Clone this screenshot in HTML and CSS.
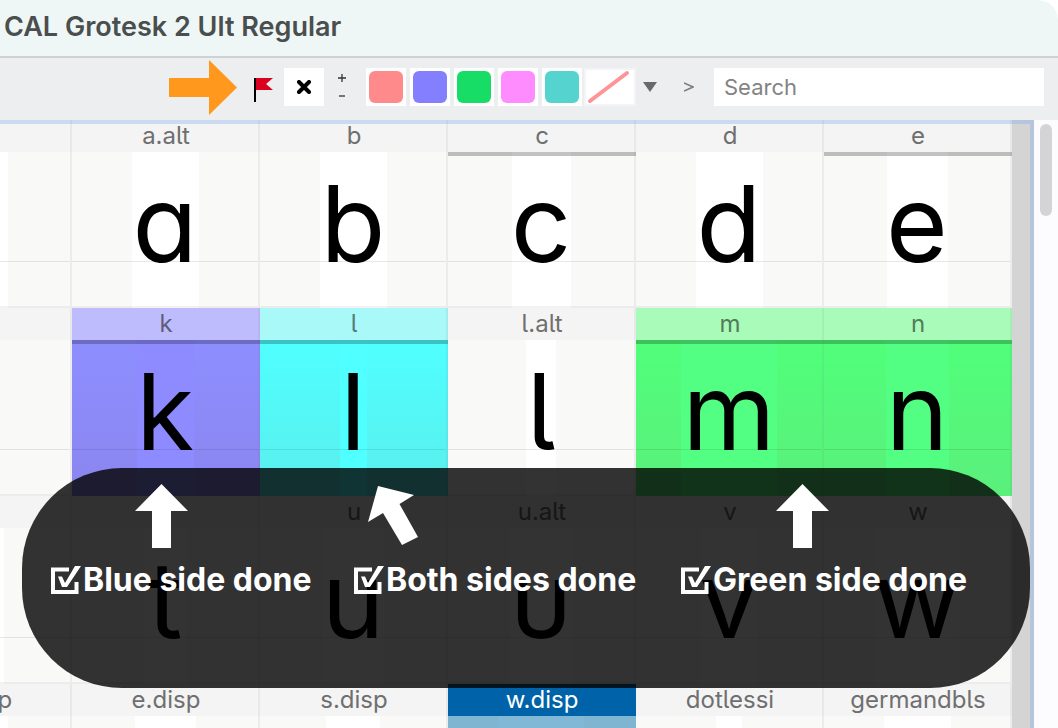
FILE: index.html
```html
<!DOCTYPE html>
<html lang="en">
<head>
<meta charset="utf-8">
<title>CAL Grotesk 2 Ult Regular</title>
<link rel="stylesheet" href="styles.css">
</head>
<body>
<div class="window">
  <header class="titlebar"><h1 class="title">CAL Grotesk 2 Ult Regular</h1></header>

  <div class="toolbar">
    <svg class="pointer" width="69" height="56" viewBox="0 0 69 56" aria-hidden="true"><path d="M0 19H40V1L68 28.500L40 56V38H0Z" fill="#ff981d"/></svg>
    <button class="flag" aria-label="Flag"><svg width="20" height="24" viewBox="0 0 20 24"><path d="M0 0H2V24H0Z" fill="#000"/><path d="M2 0H19L12 6L19 12H2Z" fill="#dc0020"/></svg></button>
    <button class="clear" aria-label="Clear"><svg width="14" height="14" viewBox="0 0 14 14"><path d="M2 2L12 12M12 2L2 12" stroke="#000" stroke-width="4" stroke-linecap="round"/></svg></button>
    <div class="stepper">
      <button class="step" aria-label="Increase"><svg width="8" height="8" viewBox="0 0 8 8"><path d="M0 4H8M4 0V8" stroke="#333" stroke-width="1.3"/></svg></button>
      <button class="step" aria-label="Decrease"><svg width="8" height="8" viewBox="0 0 8 8"><path d="M1 4H7" stroke="#333" stroke-width="1.3"/></svg></button>
    </div>
    <div class="swatches">
      <button class="swatch" aria-label="Red"><span class="chip red"></span></button>
      <button class="swatch" aria-label="Blue"><span class="chip blue"></span></button>
      <button class="swatch" aria-label="Green"><span class="chip green"></span></button>
      <button class="swatch" aria-label="Pink"><span class="chip pink"></span></button>
      <button class="swatch" aria-label="Teal"><span class="chip teal"></span></button>
      <button class="nocolor" aria-label="No colour"><svg width="48" height="34" viewBox="0 0 48 34"><path d="M4 31L41 3" stroke="#ff9498" stroke-width="4" stroke-linecap="round"/></svg></button>
    </div>
    <button class="more" aria-label="More colours"><svg width="14" height="10" viewBox="0 0 14 10"><path d="M0 0H14L7 10Z" fill="#696969"/></svg></button>
    <button class="expand" aria-label="Expand"><svg width="10" height="10" viewBox="0 0 10 10"><path d="M0 1L9 5L0 9" fill="none" stroke="#7c7c7c" stroke-width="1.5"/></svg></button>
    <input class="search" type="text" placeholder="Search" aria-label="Search">
  </div>

  <main class="overview">
    <div class="glyphs">
      <div class="cell"><div class="name"></div><div class="body"><span class="glyph" style="width:62px"></span></div></div>
      <div class="cell"><div class="name">a.alt</div><div class="body"><span class="glyph alt-a" style="width:67px">a</span></div></div>
      <div class="cell"><div class="name">b</div><div class="body"><span class="glyph" style="width:67px">b</span></div></div>
      <div class="cell edited"><div class="name">c</div><div class="body"><span class="glyph" style="width:59px">c</span></div></div>
      <div class="cell"><div class="name">d</div><div class="body"><span class="glyph" style="width:67px">d</span></div></div>
      <div class="cell edited"><div class="name">e</div><div class="body"><span class="glyph" style="width:61px">e</span></div></div>

      <div class="cell"><div class="name"></div><div class="body"><span class="glyph" style="width:27px"></span></div></div>
      <div class="cell edited mark-blue"><div class="name">k</div><div class="body"><span class="glyph" style="width:57px">k</span></div></div>
      <div class="cell edited mark-cyan"><div class="name">l</div><div class="body"><span class="glyph" style="width:27px">l</span></div></div>
      <div class="cell"><div class="name">l.alt</div><div class="body"><span class="glyph alt-l" style="width:30px">l</span></div></div>
      <div class="cell edited mark-green"><div class="name">m</div><div class="body"><span class="glyph" style="width:96px">m</span></div></div>
      <div class="cell edited mark-green"><div class="name">n</div><div class="body"><span class="glyph" style="width:63px">n</span></div></div>

      <div class="cell"><div class="name"></div><div class="body"><span class="glyph" style="width:54px"></span></div></div>
      <div class="cell"><div class="name">t</div><div class="body"><span class="glyph" style="width:41px">t</span></div></div>
      <div class="cell"><div class="name">u</div><div class="body"><span class="glyph" style="width:63px">u</span></div></div>
      <div class="cell"><div class="name">u.alt</div><div class="body"><span class="glyph" style="width:63px">υ</span></div></div>
      <div class="cell"><div class="name">v</div><div class="body"><span class="glyph" style="width:57px">v</span></div></div>
      <div class="cell"><div class="name">w</div><div class="body"><span class="glyph" style="width:84px">w</span></div></div>

      <div class="cell"><div class="name">a.disp</div><div class="body"><span class="glyph" style="width:62px"></span></div></div>
      <div class="cell"><div class="name">e.disp</div><div class="body"><span class="glyph" style="width:61px"></span></div></div>
      <div class="cell"><div class="name">s.disp</div><div class="body"><span class="glyph" style="width:54px"></span></div></div>
      <div class="cell selected"><div class="name">w.disp</div><div class="body"><span class="glyph" style="width:86px"></span></div></div>
      <div class="cell"><div class="name">dotlessi</div><div class="body"><span class="glyph" style="width:26px"></span></div></div>
      <div class="cell"><div class="name">germandbls</div><div class="body"><span class="glyph" style="width:67px"></span></div></div>
    </div>
    <div class="gutter"></div>
    <div class="scroller"><div class="thumb"></div></div>
    <div class="focus"></div>

    <section class="callout">
      <div class="note">
        <svg class="arrow" width="54" height="64" viewBox="0 0 54 64" aria-hidden="true"><path d="M26.500 0L53 27H36V64H17V27H0Z" fill="#fff"/></svg>
        <label class="check"><span class="tick"><input type="checkbox" checked><svg width="30" height="28" viewBox="0 0 30 28"><path d="M18 3.500H2V26H25.500V16" fill="none" stroke="#fff" stroke-width="4"/><path d="M7 10.500H11L14 17L24 0H30L16 21H11Z" fill="#fff"/></svg></span>Blue side done</label>
      </div>
      <div class="note">
        <svg class="arrow tilted" width="54" height="64" viewBox="0 0 54 64" aria-hidden="true"><path d="M10 2L46 11L31.500 20L50 53L34 61L15 29L0 38Z" fill="#fff"/></svg>
        <label class="check"><span class="tick"><input type="checkbox" checked><svg width="30" height="28" viewBox="0 0 30 28"><path d="M18 3.500H2V26H25.500V16" fill="none" stroke="#fff" stroke-width="4"/><path d="M7 10.500H11L14 17L24 0H30L16 21H11Z" fill="#fff"/></svg></span>Both sides done</label>
      </div>
      <div class="note">
        <svg class="arrow far" width="54" height="64" viewBox="0 0 54 64" aria-hidden="true"><path d="M26.500 0L53 27H36V64H17V27H0Z" fill="#fff"/></svg>
        <label class="check"><span class="tick"><input type="checkbox" checked><svg width="30" height="28" viewBox="0 0 30 28"><path d="M18 3.500H2V26H25.500V16" fill="none" stroke="#fff" stroke-width="4"/><path d="M7 10.500H11L14 17L24 0H30L16 21H11Z" fill="#fff"/></svg></span>Green side done</label>
      </div>
    </section>
  </main>
</div>
</body>
</html>
```
FILE: styles.css
```css
* { box-sizing: border-box; }

body {
  margin: 0;
  background: #fff;
  font-family: Inter, "Liberation Sans", sans-serif;
}

button {
  display: flex;
  align-items: center;
  justify-content: center;
  margin: 0;
  padding: 0;
  border: 0;
  background: none;
}

svg { display: block; }

.window {
  display: flex;
  flex-direction: column;
  height: 100vh;
  overflow: hidden;
  border-top-right-radius: 20px;
}

/* Title bar and toolbar */
.titlebar {
  flex: none;
  height: 58px;
  padding: 10px 4px;
  background: #eef7f6;
  border-bottom: 2px solid #cfd1d2;
  border-top-right-radius: 20px;
}

.title {
  margin: 0;
  color: #4a4e4e;
  font-size: 27px;
  font-weight: 600;
  line-height: 34px;
}

.toolbar {
  flex: none;
  display: flex;
  align-items: center;
  height: 62px;
  padding: 0 14px 4px 169px;
  background: #edeef0;
}

.pointer { flex: none; margin-right: 16px; }
.flag { margin-right: 10px; padding-top: 5px; }
.clear { width: 40px; height: 38px; background: #fff; }
.stepper { display: grid; gap: 10px; margin: 0 20px 0 14px; }
.swatches { display: flex; align-items: center; gap: 4px; }
.swatch { width: 40px; height: 38px; background: #fff; }
.chip { width: 34px; height: 32px; border-radius: 6px; }
.red { background: #ff8a8c; }
.blue { background: #837fff; }
.green { background: #17dd66; }
.pink { background: #ff8cff; }
.teal { background: #55d3cf; }
.nocolor { background: #fff; outline: 2px solid #f4f4f6; }
.more { margin-left: 9px; }
.expand { margin: 0 20px 0 27px; }

.search {
  flex: 1;
  min-width: 0;
  height: 38px;
  padding: 0 10px;
  border: 0;
  border-radius: 0;
  background: #fff;
  font: 22px/38px Inter, "Liberation Sans", sans-serif;
}
.search::placeholder { color: #838383; opacity: 1; }

/* Glyph overview */
.overview {
  position: relative;
  flex: 1;
  display: flex;
  min-height: 0;
}

.glyphs {
  flex: 1;
  min-width: 0;
  display: grid;
  grid-template-columns: repeat(6, 188px);
  grid-auto-rows: 188px;
  justify-content: end;
  overflow: hidden;
}

.cell {
  position: relative;
  display: flex;
  flex-direction: column;
  background: #f9f9f8;
}
.cell::after {
  content: "";
  position: absolute;
  inset: 0;
  border: solid rgba(110, 110, 120, 0.09);
  border-width: 0 2px 2px 0;
}

.name {
  height: 32px;
  background: #f4f4f4;
  color: #6f6f6f;
  font-size: 24px;
  line-height: 32px;
  text-align: center;
  font-feature-settings: "cv05";
}

.body {
  position: relative;
  flex: 1;
  display: flex;
  justify-content: center;
  padding-right: 2px;
}
.body::after {
  content: "";
  position: absolute;
  inset: 109px 2px auto 0;
  height: 1px;
  background: rgba(0, 0, 0, 0.09);
}
.edited .body::before {
  content: "";
  position: absolute;
  inset: 0 0 auto;
  height: 4px;
  background: rgba(0, 0, 0, 0.24);
}

.glyph {
  display: flex;
  justify-content: center;
  background: #fff;
  color: #000;
  font-size: 106px;
  line-height: 144px;
}
.alt-a { font-feature-settings: "cv11"; }
.alt-l { font-feature-settings: "cv05"; }

.mark-blue .name { background: #bebcfd; color: #5e5d7c; }
.mark-blue .body { background: linear-gradient(#8e8eff, #8a86ef); }
.mark-blue .glyph { background: #8d8bff; }
.mark-cyan .name { background: #a9f9f9; color: #537b7b; }
.mark-cyan .body { background: linear-gradient(#4fffff, #5aeeec); }
.mark-cyan .glyph { background: #50ffff; }
.mark-green .name { background: #a9fbb9; color: #537c5b; }
.mark-green .body { background: linear-gradient(#50ff7a, #5bef7c); }
.mark-green .glyph { background: #52ff82; }
.mark-blue::after,
.mark-cyan::after,
.mark-green::after { border-bottom-color: transparent; }

.selected .name { background: #0063a9; color: #fff; }
.selected .body { background: #7fb5d1; }
.selected .glyph { background: #80b8d5; }
.selected::after { border-color: transparent; }

.gutter { flex: none; width: 22px; background: #d4d4d4; }
.scroller { flex: none; width: 24px; padding: 4px 6px; background: #fcfcff; }
.thumb { height: 92px; border-radius: 6px; background: #d4d4d6; }

.focus {
  position: absolute;
  inset: 0 24px 0 0;
  border: solid rgba(130, 170, 235, 0.36);
  border-width: 4px 4px 0 0;
  pointer-events: none;
}

/* Callout laid over the overview */
.callout {
  position: absolute;
  inset: 348px 28px auto 22px;
  display: grid;
  grid-template-columns: 303fr 327fr 349fr;
  height: 220px;
  padding: 16px 0 0 29px;
  border-radius: 100px;
  background: rgba(0, 0, 0, 0.8);
  color: #fff;
}
.arrow { margin-left: 84px; }
.arrow.tilted { margin-left: 14px; }
.arrow.far { margin-left: 95px; }

.check {
  display: flex;
  align-items: center;
  gap: 2px;
  margin-top: 12px;
  font-size: 32px;
  font-weight: 700;
  line-height: 40px;
  white-space: nowrap;
}
.tick { position: relative; }
.tick input {
  position: absolute;
  inset: 0;
  width: 100%;
  height: 100%;
  margin: 0;
  opacity: 0;
}
```
